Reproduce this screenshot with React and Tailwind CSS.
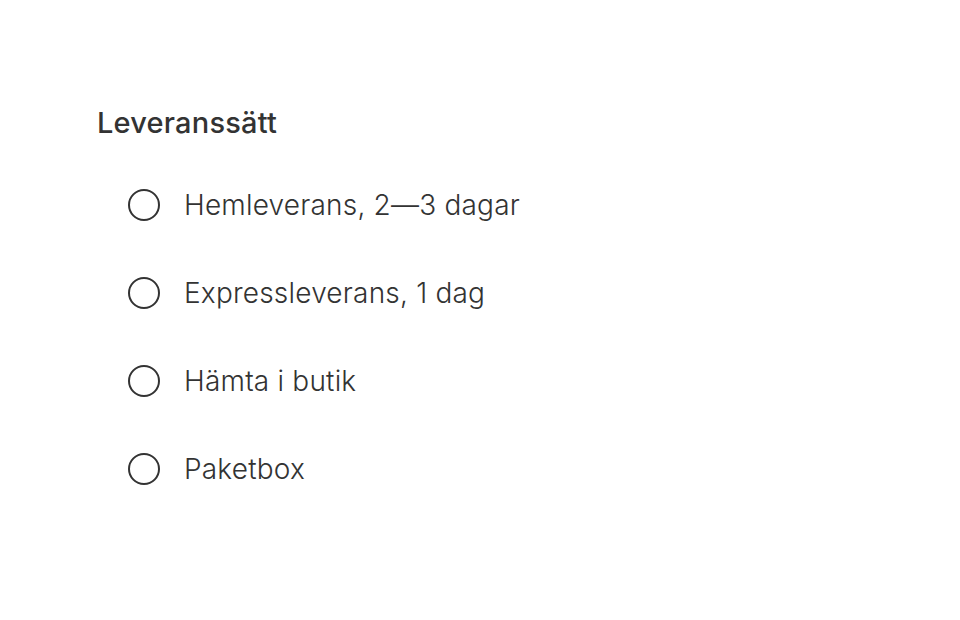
const OPTIONS = [
  'Hemleverans, 2—3 dagar',
  'Expressleverans, 1 dag',
  'Hämta i butik',
  'Paketbox',
]

export default function App() {
  return (
    <div className="w-[960px] h-[620px] bg-white text-[#333333] pl-[97px] pt-[103px]" style={{ fontFamily: 'Inter, Roboto, "Liberation Sans", sans-serif' }}>
      <div role="radiogroup" aria-label="Leveranssätt">
        <div className="text-[29px] font-medium leading-[40px] tracking-[0.2px]">Leveranssätt</div>
        <div className="flex flex-col gap-[40px] mt-[38px] pl-[31px]">
          {OPTIONS.map(opt => (
            <label key={opt} className="flex items-center gap-[24px] h-[48px]">
              <span className="w-[32px] h-[32px] rounded-full border-2 border-[#333333] flex-shrink-0" />
              <span className="text-[28px] font-light leading-[48px] tracking-[0.2px]">{opt}</span>
            </label>
          ))}
        </div>
      </div>
    </div>
  )
}
